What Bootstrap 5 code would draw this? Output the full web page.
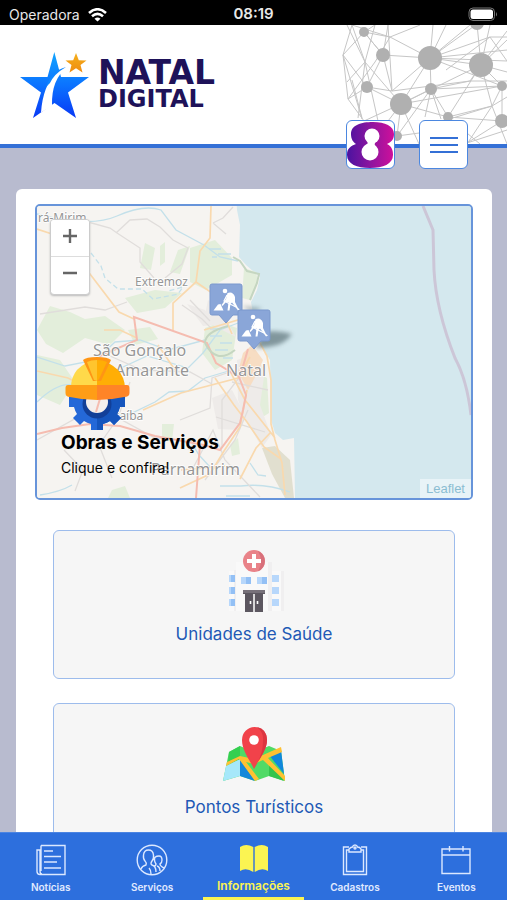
<!DOCTYPE html>
<html lang="pt-BR">
<head>
<meta charset="utf-8">
<meta name="viewport" content="width=device-width, initial-scale=1">
<title>Natal Digital</title>
<link href="https://cdn.jsdelivr.net/npm/bootstrap@5.3.0/dist/css/bootstrap.min.css" rel="stylesheet">
<style>
  body { font-family: Inter, "Liberation Sans", sans-serif; background: #b8bbcf; color: #000; }
  .status-bar { background: #000; color: #e8e8e8; height: 25px; font-size: 14px; padding: 4px 9px 0; }
  .status-bar > * { flex: 1 1 0; }
  .clock { font-weight: 600; font-size: 15px; }
  .site-header { border-bottom: 4px solid #3470d6; z-index: 2; }
  .brand { padding-left: 20px; gap: 8px; color: #1e1259; font-family: "DejaVu Sans", sans-serif; font-weight: 700; }
  .brand:hover { color: #1e1259; }
  .brand-top { font-size: 33px; line-height: 29px; }
  .brand-sub { font-size: 24px; line-height: 25px; }
  .header-actions { right: 39px; bottom: -25px; gap: 24px; }
  .action { width: 49px; height: 49px; border: 1px solid #4b87e0; border-radius: 6px; background: #fff; }
  .scroller { scrollbar-width: none; }
  .scroller::-webkit-scrollbar { display: none; }
  .panel { margin: 41px 15px 0 16px; padding: 15px 19px; border-radius: 6px; }
  .map-box { border: 2px solid #6794da; border-radius: 5px; height: 296px; margin-bottom: 30px; background: #d4e8ee; }
  .map-svg { font-family: "Noto Sans", sans-serif; }
  .zoom-control { left: 13px; top: 13px; width: 40px; padding-bottom: 2px; background: #fff; border: 1px solid #ccc; border-radius: 4px; box-shadow: 0 1px 2px #bbb; }
  .zoom-control button { height: 36px; padding: 0 0 4px; background: #fff; }
  .zoom-control button + button { border-top: 1px solid #ddd !important; }
  .caption-box { left: 24px; bottom: 18px; }
  .caption-title { font-size: 19px; line-height: 26px; font-weight: 700; color: #000; }
  .caption-text { font-size: 14px; line-height: 24px; }
  .attribution { right: 0; bottom: 0; padding: 0 6px; background: #e8f3f7; color: #8bbdd2; font: 13px/19px "Liberation Sans", sans-serif; }
  .tile { margin: 0 18px 24px; height: 149px; border: 1px solid #9dbcec; border-radius: 6px; background: #f6f6f6; color: #2159b5; font-size: 17px; line-height: 24px; padding-top: 17px; gap: 6px; }
  .tab-bar { background: #2d6fdd; height: 68px; border-top: 1px solid #4b84e2; }
  .tab { color: #e0eaff; font-size: 10px; line-height: 12px; font-weight: 600; padding-top: 11px; gap: 5px; border-bottom: 3px solid transparent; }
  .tab.current { color: #fbf452; font-size: 12px; border-bottom-color: #fbf452; gap: 4px; }
</style>
<script src="https://cdn.jsdelivr.net/npm/bootstrap@5.3.0/dist/js/bootstrap.bundle.min.js"></script>
</head>
<body>
<div class="vh-100 d-flex flex-column overflow-hidden">
  <div class="status-bar d-flex align-items-center flex-shrink-0">
    <div class="d-flex align-items-center gap-2"><span>Operadora</span>
      <svg width="19" height="14" viewBox="0 0 19 14" fill="none" stroke="#fff" stroke-width="2.6" aria-hidden="true"><path d="M1 5Q9.500-2.500 18 5M4 8.300Q9.500 3.500 15 8.300"/><path d="M9.500 13.500L6.500 10.700Q9.500 8.300 12.500 10.700Z" fill="#fff" stroke="none"/></svg>
    </div>
    <div class="clock text-center">08:19</div>
    <div class="text-end">
      <svg class="d-block ms-auto" width="30" height="15" viewBox="0 0 30 15" aria-hidden="true"><rect x="1" y="1" width="25.500" height="12.500" rx="4" fill="none" stroke="#777"/><rect x="2.500" y="2.500" width="22.500" height="9.500" rx="2.500" fill="#fff"/><path d="M28 5v4.500q2-2 0-4.500" fill="#777"/></svg>
    </div>
  </div>

  <header class="site-header bg-white position-relative d-flex justify-content-between flex-shrink-0">
    <a class="brand d-flex align-items-center text-decoration-none" href="#">
      <svg width="70" height="68" viewBox="20 52 70 68" aria-hidden="true">
        <defs>
          <linearGradient id="blueStar" x1="0" y1="0" x2="0" y2="1"><stop offset="0" stop-color="#12a5ff"/><stop offset=".5" stop-color="#0b73ff"/><stop offset="1" stop-color="#0938f5"/></linearGradient>
          <linearGradient id="goldStar" x1="0" y1="0" x2="0" y2="1"><stop offset="0" stop-color="#f5b01c"/><stop offset="1" stop-color="#ef8c10"/></linearGradient>
        </defs>
        <path d="M54.300 53L61 78H89L68 93.500L76 119L54.500 104L33 119L41 93.500L20 78H47.500Z" fill="url(#blueStar)"/>
        <path d="M41 113.500Q43 86 57 73Q62 69 68 67.500Q51 80 52 107Z" fill="#fff"/>
        <path d="M46 88Q51 72 66 68Q54 75 50 84Z" fill="#0d85ff"/>
        <path d="M76 54L78.800 61.300L86.500 61.500L80.500 66L82.500 73.500L76 69.300L69.500 73.500L71.500 66L65.500 61.500L73.200 61.300Z" fill="url(#goldStar)"/>
      </svg>
      <span class="d-flex flex-column"><span class="brand-top">NATAL</span><span class="brand-sub">DIGITAL</span></span>
    </a>
    <svg width="165" height="119" viewBox="342 25 165 119" aria-hidden="true">
      <g fill="none" stroke="#c6c6c6" stroke-width="1">
        <path d="M352 25L343 55L348 99L367 87L383 55L364 32L343 55L367 87L401 104L430 58L383 55L364 32L375 25M343 55L362 119M348 99L364 121L401 104L431 89L430 58L481 65L502 86L431 89L448 117L502 121V86M347 82L365 62L375 25M365 62L352 25M365 62L378 121M365 62L401 104M383 55L392 91L430 58M392 91L367 87M392 91L388 25M390 37L430 58L433 25M390 37L364 32M390 37L352 25M390 37L420 25M390 37L375 62L348 99M430 58L446 25M430 58L470 25M430 58L477 24L481 65L490 25M481 65L507 31M490 37H507M430 58L507 50M430 58L502 86M430 58L507 61M401 104L481 65M401 104L502 86M401 104L448 117L481 65L492 106L448 117M401 104L397 136L431 89M431 89L425 117M431 89L441 119M431 89L470 81H507M392 91L470 81L481 65M492 106L507 97M492 106L507 144M492 106L467 144M502 121L467 143M467 143L507 130M401 104L419 144M401 104L385 125M448 117L480 144M502 86L492 106L430 125M397 136L419 133M347 25L365 62L358 118M507 72L481 65L507 40M490 37L446 70M383 55L388 25M490 37L430 58M490 37L507 61M352 80L362 118"/>
      </g>
      <g fill="#b0b0b0"><circle cx="364" cy="32" r="5"/><circle cx="383" cy="55" r="7"/><circle cx="430" cy="58" r="12"/><circle cx="481" cy="65" r="12"/><circle cx="477" cy="23" r="7"/><circle cx="367" cy="87" r="6"/><circle cx="401" cy="104" r="11"/><circle cx="431" cy="89" r="6"/><circle cx="502" cy="86" r="5"/><circle cx="502" cy="121" r="7"/><circle cx="448" cy="117" r="5"/><circle cx="397" cy="136" r="5"/></g>
    </svg>
    <div class="header-actions position-absolute d-flex">
      <button class="action p-0 overflow-hidden" type="button" aria-label="Assistente">
        <svg class="d-block" width="47" height="47" viewBox="0 0 47 47" aria-hidden="true">
          <defs><linearGradient id="eight"><stop offset="0" stop-color="#4b13a0"/><stop offset=".5" stop-color="#8d159f"/><stop offset="1" stop-color="#d0109b"/></linearGradient></defs>
          <path d="M4 13C4 4 14 1 26 1S47 5 47 13C47 19 44 21 40 23C44 25 46 28 46 34C46 43 36 47 23 47S0 43 0 34C0 27 4 25 9 23C6 21 4 18 4 13Z" fill="url(#eight)"/>
          <circle cx="25" cy="15" r="7.500" fill="#fff"/><circle cx="23" cy="31" r="8.500" fill="#fff"/><path d="M20 18Q22 23 18 27H29Q26 23 30 18Z" fill="#fff"/>
        </svg>
      </button>
      <button class="action p-0 d-flex align-items-center justify-content-center" type="button" aria-label="Menu">
        <svg width="28" height="18" viewBox="0 0 28 18" stroke="#3470d6" stroke-width="2" aria-hidden="true"><path d="M0 2h28M0 9h28M0 16h28"/></svg>
      </button>
    </div>
  </header>

  <main class="scroller flex-grow-1 overflow-auto">
    <div class="panel bg-white">
      <div class="map-box position-relative overflow-hidden">
        <svg class="map-svg d-block w-100 h-100" viewBox="37 206 434 292" preserveAspectRatio="xMidYMid slice" role="img" aria-label="Mapa de Natal e região">
          <defs><filter id="soft" x="-50%" y="-50%" width="200%" height="200%"><feGaussianBlur stdDeviation="2"/></filter></defs>
          <rect x="-200" y="106" width="900" height="500" fill="#d4e8ee"/>
          <path d="M-200 106H231L237 210L240 225L239 257L246 265L254 272L260 277L257 290L251 302L256 330L264 350L270 360L271 420L275 433L283 440L294 438L295 497V600H-200Z" fill="#f6f4f1"/>
          <g fill="#e3eedb">
            <path d="M190 248L215 240L232 258V275L206 290L190 282Z"/><path d="M145 243L155 248L151 270L140 268ZM160 246L165 242V262L160 266ZM178 250L190 246L180 274L170 272Z"/>
            <path d="M37 330L50 306L70 312L85 319L105 316L125 330L110 345L85 338L63 353L46 344ZM37 355L60 360L75 382L60 405L37 395ZM125 298L155 290L182 293L165 308L137 313ZM128 330L150 327L158 339L135 345Z"/>
            <path d="M244 268L256 272L258 282L250 300L242 298ZM260 374L267 378L269 413L258 420ZM205 328L220 322L237 328L232 360L215 370L202 353ZM230 445L238 438L240 454L232 456ZM162 424H174L172 441H162ZM112 490L125 486L130 498H108Z"/>
          </g>
          <path d="M262 448L275 446L290 460L294 498H285L272 474Z" fill="#e1dfcf"/>
          <path d="M208 300L222 312L236 337L222 330L204 320ZM187 304L205 310L215 325L203 326ZM237 360L254 354L265 370L260 405L271 435L262 448L246 420L238 400ZM212 398L232 390L245 415L240 430L218 429Z" fill="#eeebe9"/>
          <path d="M243 353L252 345L263 360L258 372L248 390L238 372Z" fill="#f7ddc3"/>
          <g fill="none" stroke="#c3e0ea" stroke-width="1.300">
            <path d="M37 214Q90 228 117 216T161 210L176 230L204 245L220 257L238 261"/>
            <path d="M91 253L101 266L105 278L118 289L142 289L153 299L178 294L183 287L168 291" stroke-dasharray="5 3"/>
            <path d="M37 402Q65 375 82 390T121 368L147 356L188 368L203 353L220 330L238 323M100 417L130 414L155 402L169 392L188 391L205 378L232 370"/>
            <path d="M37 357L65 366L96 360L115 342L140 340L168 350L205 340M210 336h12M215 350h13M210 329h12M220 343h12M223 358h10M209 249h12M212 257h5M218 254h13"/>
            <path d="M40 495Q60 492 72 485M220 486H241Q265 483 290 492M226 496H250M250 463L258 475L266 476M190 440L199 455L210 467"/>
          </g>
          <g fill="none" stroke="#e0dddb" stroke-width="1.300">
            <path d="M88 222L110 228L117 233L140 248V262L154 278M116 233L130 220L147 219L160 227L173 240L188 248L182 264L165 278M213 223L223 218L233 207M213 223L226 234M40 314L85 307L105 310L127 302M37 440L80 416L120 419L155 438L172 439M180 420L210 408L212 378L236 370M192 470L213 430L225 460L260 497M205 480L235 440L248 410M248 366L222 400L222 448M232 382L268 390M216 417L265 432M182 305L202 319L215 332M190 300L210 321M110 356L142 370L190 372L212 384M130 382L118 418L99 445L112 478M64 450L83 470L75 491"/>
          </g>
          <g fill="none" stroke="#f9d9ae" stroke-width="1.700">
            <path d="M211 206L210 238L200 251L196 282L173 303V330M196 282L215 295L225 318L232 334M37 229L55 235L90 274L119 312L134 319M104 330H120L137 338M204 330L238 320L257 337L267 356L271 380L271 424L275 440L282 463L285 495M158 345L175 370M215 378L234 405L247 422L264 447L281 459M247 390L240 427L224 451L210 474L180 488M271 432L256 448L240 479M37 371L68 378L91 390M181 470L225 466M143 410L181 393L238 378L250 357M230 371L245 400L275 438"/>
          </g>
          <g fill="none" stroke="#f5bcb0" stroke-width="2">
            <path d="M100 356L137 340L134 317L207 343L216 363L239 377L246 395L243 410L240 423L220 450L204 445L155 436L120 426L90 424L62 428L37 434M200 444L196 498M248 349L240 377"/>
          </g>
          <path d="M233 257L240 261L247 271L259 274L257 283L250 300M205 343Q205 332 228 326M205 343Q216 365 235 350" fill="none" stroke="#c5d6c1" stroke-width="2"/>
          <path d="M423 206L433 230L434 270Q436 310 455 358Q467 380 471 415" fill="none" stroke="#ccc6d7" stroke-width="3"/>
          <g fill="#969696" stroke="#fff" stroke-width="1.500" paint-order="stroke">
            <text x="38" y="222" font-size="12">rá-Mirim</text><text x="135" y="286" font-size="12">Extremoz</text>
            <text x="93" y="356" font-size="16">São Gonçalo</text><text x="115" y="376" font-size="16">Amarante</text>
            <text x="226" y="376" font-size="16">Natal</text><text x="96" y="420" font-size="12">Macaíba</text><text x="151" y="475" font-size="16">Parnamirim</text>
          </g>
          <path d="M255 348L264 332Q277 330 292 334Q285 345 268 347Z" fill="#667c82" opacity=".75" filter="url(#soft)"/>
          <path d="M242 306L262 308L254 314Z" fill="#667c82" opacity=".5" filter="url(#soft)"/>
          <g id="marker">
            <path d="M212 284H240Q242 284 242 286V313Q242 315 240 315H233L226 323L219 315H212Q210 315 210 313V286Q210 284 212 284Z" fill="#8aa6d8" stroke="#7b98cd"/>
            <circle cx="225" cy="291" r="2.300" fill="#fff"/>
            <path d="M227.500 293Q233 291 235 297L235 302L238 308L240 309.500L238 310.500L232 302.500L230.500 304L229.500 310.500H227.500L228.500 302L226 302L222.500 306L221.500 305L226 299Z" fill="#fff"/>
            <path d="M227 295L224 301L236 307" fill="none" stroke="#fff" stroke-width="1.200"/>
            <path d="M213.500 310.500L218 304.500L220.500 304L223.500 310.500Z" fill="#fff"/>
          </g>
          <use href="#marker" x="28" y="26"/>
        </svg>
        <div class="zoom-control position-absolute d-flex flex-column overflow-hidden">
          <button class="border-0" type="button" aria-label="Aumentar zoom"><svg class="d-block mx-auto" width="16" height="16" viewBox="0 0 16 16" stroke="#666" stroke-width="2.400" aria-hidden="true"><path d="M1 8h14M8 1v14"/></svg></button>
          <button class="border-0" type="button" aria-label="Diminuir zoom"><svg class="d-block mx-auto" width="16" height="16" viewBox="0 0 16 16" stroke="#666" stroke-width="2.400" aria-hidden="true"><path d="M1 8h14"/></svg></button>
        </div>
        <div class="caption-box position-absolute">
          <svg class="d-block ms-1" width="66" height="74" viewBox="65 354 66 74" aria-hidden="true">
            <path d="M69 393H125V405H120Q119 409 117 412L121 416L114 423L110 419Q107 421 103 422V428H91V422Q87 421 84 419L80 423L73 416L77 412Q75 409 74 405H69Z" fill="#2468d8"/>
            <path d="M97 393H125V405H120Q119 409 117 412L121 416L114 423L110 419Q107 421 103 422V428H97Z" fill="#1555bd"/>
            <circle cx="97" cy="402" r="14.500" fill="#123f98"/><circle cx="97" cy="400" r="11" fill="#f4efed"/><path d="M96 410L102 390" stroke="#f5bcb0" stroke-width="2"/>
            <path d="M71 386Q71 363 97 358V386Z" fill="#ffd94a"/><path d="M97 358Q124 363 125 386H97Z" fill="#ffae05"/>
            <path d="M83 358Q86 355 97 355T111 358L101 379H93Z" fill="#ff9514"/><path d="M87 360Q91 358 97 358V379L94 378Z" fill="#ffc52e"/><path d="M97 358Q103 358 107 360L99 377L97 379Z" fill="#ffae05"/>
            <path d="M97 383H127Q129.500 383 129.500 386V391Q129.500 395 124 395Q111 398 97 398Z" fill="#ff8427"/><path d="M97 383H68Q65.500 383 65.500 386V391Q65.500 395 70 395Q83 398 97 398Z" fill="#ff9d16"/>
          </svg>
          <h2 class="caption-title mb-0">Obras e Serviços</h2>
          <p class="caption-text mb-0">Clique e confira!</p>
        </div>
        <a class="attribution position-absolute text-decoration-none" href="#">Leaflet</a>
      </div>

      <a class="tile d-flex flex-column align-items-center text-decoration-none" href="#">
        <svg class="flex-shrink-0" width="62" height="68" viewBox="223 547 62 68" aria-hidden="true">
          <path d="M229 570H236V610H229ZM236 561H269V610H236ZM272 570H281V610H272Z" fill="#f9f9f9"/><path d="M234 569H236V610H234ZM268 561H272V610H268ZM281 570H284V610H281Z" fill="#f0eff0"/>
          <circle cx="254" cy="560" r="11" fill="#e98389"/><path d="M258 550A11 11 0 0 1 258 570.300Q264 560 258 550" fill="#d8707b"/><path d="M254 553V567M247 560H261" stroke="#fff" stroke-width="4"/>
          <g fill="#b7d7fb"><path d="M229 574h6v7h-6zM229 586h6v7h-6zM229 598h6v7h-6zM241 576h10v7h-10zM257 576h10v7h-10zM272 574h7v7h-7zM272 586h7v7h-7zM272 598h7v7h-7z"/></g>
          <path d="M231 574h4v7h-4zM231 586h4v7h-4zM231 598h4v7h-4zM246 576h5v7h-5zM262 576h5v7h-5z" fill="#93c0f5"/>
          <path d="M243 589H265V593H263V611H245V593H243Z" fill="#5c5760"/><path d="M243 589H265V592H243Z" fill="#77717a"/><path d="M254 593V611" stroke="#f6f6f6" stroke-width="1.600"/><path d="M250.500 600v3M257.500 600v3" stroke="#fff" stroke-width="1.600"/>
        </svg>
        <span>Unidades de Saúde</span>
      </a>
      <a class="tile d-flex flex-column align-items-center text-decoration-none" href="#">
        <svg class="flex-shrink-0" width="62" height="68" viewBox="223 720 62 68" aria-hidden="true">
          <path d="M229 751L240 745L254 751L269 745L281 750L285 780L269 775L255 780L240 775L223 780Z" fill="#50da66"/>
          <path d="M226 765L240 758V775L223 780Z" fill="#a6e8fa"/><path d="M240 758L255 780L240 775Z" fill="#1387da"/><path d="M240 745V758L228 763L229 751Z" fill="#35cf50"/>
          <path d="M269 754L281 749L284 773Z" fill="#1088dc"/><path d="M269 758L284 780L269 775Z" fill="#34c44d"/>
          <path d="M227 761L240 755L254 758L281 746L282 751L268 757L285 775V780L263 759L254 763L246 761L259 778L255 780L239 758L226 765Z" fill="#ffc132"/>
          <path d="M254 768C250 759 242 750 242 739A12.500 13 0 0 1 267 739C267 750 258 759 254 768Z" fill="#f1424a"/><path d="M254 768C260 758 263 750 263 740Q264 732 257 726Q267 728 267 739C267 750 258 759 254 768Z" fill="#dc3540"/><circle cx="254" cy="739" r="4.800" fill="#fff"/>
        </svg>
        <span>Pontos Turísticos</span>
      </a>
    </div>
  </main>

  <nav class="tab-bar d-flex flex-shrink-0" aria-label="Principal">
    <a class="tab col d-flex flex-column align-items-center text-decoration-none" href="#">
      <svg width="30" height="32" viewBox="0 0 30 32" fill="none" stroke="#dce8ff" stroke-width="1.400" aria-hidden="true"><path d="M5 1.500H29V30.500H4Q1 30.500 1 27.500V6H4V27Q4 30 6 30M5 27V1.500M8 7H17M8 12.500H25M8 18H21M8 24H25"/></svg>Notícias</a>
    <a class="tab col d-flex flex-column align-items-center text-decoration-none" href="#">
      <svg width="32" height="32" viewBox="0 0 32 32" fill="none" stroke="#dce8ff" stroke-width="1.400" aria-hidden="true"><circle cx="16" cy="16" r="14.800"/><path d="M5 25Q6 22 10 21Q11 19 9 17Q7 15 7.500 11Q8 6 12.500 6T17.500 11Q18 15 16 17Q14 20 16 21Q20 22 20 28M23 12Q26 12 26 16Q26 19 24 20Q24 22 28 24M23 12Q18 12 18.500 16Q18.500 18 20 20Q20 22 18 22M13 24Q15 26 15 30M21 22Q24 23 24 27"/></svg>Serviços</a>
    <a class="tab current col d-flex flex-column align-items-center text-decoration-none" href="#" aria-current="page">
      <svg width="30" height="32" viewBox="0 0 30 32" fill="#fbf452" aria-hidden="true"><path d="M1 3Q7-1 14.300 3V28Q7 23 1 27ZM15.700 3Q23-1 29 3V27Q23 23 15.700 28Z"/></svg>Informações</a>
    <a class="tab col d-flex flex-column align-items-center text-decoration-none" href="#">
      <svg width="26" height="32" viewBox="0 0 26 32" fill="none" stroke="#dce8ff" stroke-width="1.400" aria-hidden="true"><path d="M7 3H1.500V30.500H24.500V3H19M7 6H4.500V27.500H21.500V6H19M7 8V5Q9 3 10.500 3Q11 1 13 1T15.500 3Q18 3 19 5V8Z"/><circle cx="13" cy="4" r="1"/></svg>Cadastros</a>
    <a class="tab col d-flex flex-column align-items-center text-decoration-none" href="#">
      <svg width="30" height="32" viewBox="0 0 30 32" fill="none" stroke="#dce8ff" stroke-width="1.400" aria-hidden="true"><path d="M1 5H29V29.500H1ZM1 11H29M8.500 2V7.500M22 2V7.500"/></svg>Eventos</a>
  </nav>
</div>
</body>
</html>
